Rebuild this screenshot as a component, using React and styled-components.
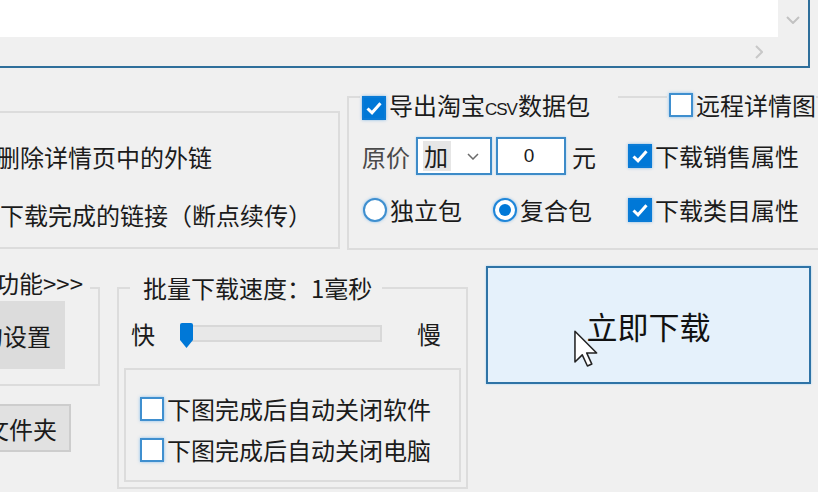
import React from 'react'
import styled, { createGlobalStyle } from 'styled-components'

const GlobalStyle = createGlobalStyle`
	html, body {
		margin: 0;
		padding: 0;
		background: #f0f0f0;
	}
	body {
		font-family: 'Noto Sans CJK SC', 'Noto Sans', sans-serif;
		color: #1b1b1b;
	}
`

const Page = styled.div`
	width: 818px;
	height: 492px;
	overflow: hidden;
	background: #f0f0f0;
	font-size: 24px;
`
// the form is wider than the shot, its left edge is cut off
const Window = styled.div`
	margin-left: -40px;
	width: 900px;
`

/* ---------- log box on top ---------- */
const LogBox = styled.div`
	margin-top: -40px;
	width: 850px;
	height: 108px;
	box-sizing: border-box;
	border: 2px solid #2f6f9b;
	background: #fff;
	display: grid;
	grid-template-columns: 1fr 30px;
	grid-template-rows: 1fr 29px;
`
const VScroll = styled.div`
	background: #f0f0f0;
	display: flex;
	align-items: flex-end;
	justify-content: center;
	padding-bottom: 13px;
`
const HScroll = styled.div`
	background: #f0f0f0;
	display: flex;
	align-items: center;
	justify-content: flex-end;
	padding-right: 15px;
`
const Corner = styled.div`
	background: #f0f0f0;
`

/* ---------- group boxes ---------- */
const Frame = styled.div`
	position: relative;
	box-sizing: border-box;
	border: 2px solid #dcdcdc;
	flex: none;
`
const MidRow = styled.div`
	display: flex;
	align-items: flex-start;
	height: 182px;
`
const OptionsGroup = styled(Frame)`
	width: 380px;
	height: 138px;
	margin-top: 43px;
	padding: 29px 0 0 34px;
	display: flex;
	flex-direction: column;
	gap: 28px;
`
const OptionLine = styled.div`
	height: 30px;
	line-height: 30px;
	white-space: nowrap;
	margin-left: ${p => p.$indent || 0}px;
`
const ExportGroup = styled(Frame)`
	width: 520px;
	height: 154px;
	margin-top: 28px;
	margin-left: 7px;
	padding: 39px 0 0 13px;
`
const TitleRow = styled.div`
	position: absolute;
	top: -4px;
	left: 11px;
	display: flex;
	align-items: center;
	height: 24px;
`
const TitleItem = styled.div`
	background: #f0f0f0;
	padding-left: 2px;
	width: ${p => (p.$w ? p.$w + 'px' : 'auto')};
	margin-left: ${p => p.$ml || 0}px;
	box-sizing: border-box;
`
const OptionGrid = styled.div`
	display: grid;
	grid-template-columns: 266px auto;
	row-gap: 22px;
	align-items: center;
`
const Inline = styled.div`
	display: flex;
	align-items: center;
	white-space: nowrap;
`
const Muted = styled.span`
	color: #4a4a4a;
	width: 48px;
	margin-right: 6px;
`
const Select = styled.div`
	box-sizing: border-box;
	width: 76px;
	height: 38px;
	border: 2px solid #3d8bc8;
	box-shadow: 0 0 2px #a6d2f5;
	background: #fff;
	display: flex;
	align-items: center;
	padding-left: 5px;
	gap: 16px;
`
const SelectValue = styled.span`
	background: #e6e6e6;
	line-height: 30px;
	padding: 0 3px 0 1px;
`
const NumInput = styled.div`
	box-sizing: border-box;
	width: 70px;
	height: 38px;
	margin-left: 4px;
	margin-right: 6px;
	border: 2px solid #3d8bc8;
	box-shadow: 0 0 2px #a6d2f5;
	background: #fff;
	font-family: 'Liberation Sans', sans-serif;
	font-size: 19px;
	display: flex;
	align-items: center;
	justify-content: center;
	padding-right: 4px;
`
const Narrow = styled.span`
	font-family: 'Liberation Sans', sans-serif;
	font-size: 17px;
	letter-spacing: -1px;
	margin-right: 1px;
`

/* ---------- checkbox / radio ---------- */
const CheckItem = styled.label`
	display: inline-flex;
	align-items: center;
	gap: 3px;
	white-space: nowrap;
	height: 26px;
	line-height: 26px;
	margin-left: ${p => p.$ml || 0}px;
`
const Box = styled.span`
	flex: none;
	width: 24px;
	height: 24px;
	box-sizing: border-box;
	display: inline-flex;
	align-items: center;
	justify-content: center;
	border: 2px solid ${p => (p.$on ? '#0a7bd6' : '#3f8fcf')};
	background: ${p => (p.$on ? '#0078d7' : '#fff')};
	box-shadow: 0 0 3px ${p => (p.$on ? 'rgba(0,120,215,.45)' : 'rgba(90,170,235,.7)')};
`
const Round = styled(Box)`
	border-radius: 50%;
	background: #fff;
	border-color: ${p => (p.$on ? '#1f86d9' : '#3f8fcf')};
`
const Dot = styled.span`
	width: 12px;
	height: 12px;
	border-radius: 50%;
	background: #0078d7;
`

const Check = ({ on, children, ml }) => (
	<CheckItem $ml={ml}>
		<Box $on={on}>
			{on && (
				<svg width='18' height='18' viewBox='0 0 18 18'>
					<path d='M2.5 9.5 L7 13.8 L15.5 4.2' fill='none' stroke='#fff' strokeWidth='3' />
				</svg>
			)}
		</Box>
		<span>{children}</span>
	</CheckItem>
)

const Radio = ({ on, children, ml }) => (
	<CheckItem $ml={ml}>
		<Round $on={on}>{on && <Dot />}</Round>
		<span>{children}</span>
	</CheckItem>
)

/* ---------- bottom row ---------- */
const BottomRow = styled.div`
	display: flex;
	align-items: flex-start;
`
const FuncCol = styled.div`
	width: 140px;
	flex: none;
`
const FuncGroup = styled(Frame)`
	width: 140px;
	height: 99px;
	margin-top: 37px;
	padding: 12px 0 0 8px;
`
const FuncTitle = styled.div`
	position: absolute;
	top: -21px;
	right: 8px;
	background: #f0f0f0;
	padding-right: 7px;
	line-height: 30px;
	white-space: nowrap;
`
const GrayButton = styled.div`
	box-sizing: border-box;
	width: 95px;
	height: 68px;
	background: #dcdcdc;
	display: flex;
	align-items: center;
	justify-content: flex-end;
	padding-right: 14px;
	white-space: nowrap;
	overflow: hidden;
`
const FolderButton = styled.div`
	box-sizing: border-box;
	margin-top: 18px;
	margin-left: 10px;
	width: 101px;
	height: 48px;
	background: #e1e1e1;
	border: 2px solid #cdcdcd;
	display: flex;
	align-items: center;
	justify-content: flex-end;
	padding-right: 12px;
	white-space: nowrap;
	overflow: hidden;
`
const SpeedGroup = styled(Frame)`
	width: 351px;
	height: 202px;
	margin-left: 17px;
	margin-top: 37px;
	padding: 29px 5px 0 5px;
`
const SpeedTitle = styled.div`
	position: absolute;
	top: -16px;
	left: 11px;
	background: #f0f0f0;
	padding: 0 10px 0 13px;
	line-height: 30px;
	white-space: nowrap;
`
const SliderRow = styled.div`
	display: flex;
	align-items: center;
	height: 30px;
	padding-left: 7px;
`
const Track = styled.div`
	position: relative;
	box-sizing: border-box;
	width: 200px;
	height: 17px;
	margin: 0 35px 0 27px;
	border: 2px solid #d8d8d8;
	background: #e8e8e8;
`
const Thumb = styled.svg`
	position: absolute;
	left: -4px;
	top: -4px;
`
const InnerBox = styled(Frame)`
	margin-top: 20px;
	width: 337px;
	height: 114px;
	padding: 26px 0 0 14px;
	display: flex;
	flex-direction: column;
	gap: 15px;
`
const BigButton = styled.button`
	position: relative;
	flex: none;
	margin-left: 18px;
	margin-top: 16px;
	width: 325px;
	height: 118px;
	box-sizing: border-box;
	background: #e5f1fb;
	border: 2px solid #2e73a6;
	box-shadow: 0 0 2px #9fd0f3;
	font-family: inherit;
	font-size: 31px;
	color: #111;
	padding: 0;
`
const Cursor = styled.svg`
	position: absolute;
	left: 86px;
	top: 62px;
`

export default function App() {
	return (
		<Page>
			<GlobalStyle />
			<Window>
				<LogBox>
					<div />
					<VScroll>
						<svg width='14' height='8' viewBox='0 0 14 8'>
							<polyline points='1,1 7,7 13,1' fill='none' stroke='#c2c2c2' strokeWidth='2' />
						</svg>
					</VScroll>
					<HScroll>
						<svg width='8' height='14' viewBox='0 0 8 14'>
							<polyline points='1,1 7,7 1,13' fill='none' stroke='#c8c8c8' strokeWidth='2' />
						</svg>
					</HScroll>
					<Corner />
				</LogBox>

				<MidRow>
					<OptionsGroup>
						<OptionLine>删除详情页中的外链</OptionLine>
						<OptionLine $indent={4}>下载完成的链接（断点续传）</OptionLine>
					</OptionsGroup>

					<ExportGroup>
						<TitleRow>
							<TitleItem $w={258}>
								<Check on>
									导出淘宝<Narrow>CSV</Narrow>数据包
								</Check>
							</TitleItem>
							<TitleItem $ml={49}>
								<Check>远程详情图</Check>
							</TitleItem>
						</TitleRow>
						<OptionGrid>
							<Inline>
								<Muted>原价</Muted>
								<Select>
									<SelectValue>加</SelectValue>
									<svg width='12' height='7' viewBox='0 0 12 7'>
										<polyline points='1,1 6,6 11,1' fill='none' stroke='#6b6b6b' strokeWidth='1.5' />
									</svg>
								</Select>
								<NumInput>0</NumInput>
								<span>元</span>
							</Inline>
							<Check on>下载销售属性</Check>
							<Inline>
								<Radio ml={1}>独立包</Radio>
								<Radio on ml={31}>复合包</Radio>
							</Inline>
							<Check on>下载类目属性</Check>
						</OptionGrid>
					</ExportGroup>
				</MidRow>

				<BottomRow>
					<FuncCol>
						<FuncGroup>
							<FuncTitle>更多功能&gt;&gt;&gt;</FuncTitle>
							<GrayButton>其它的设置</GrayButton>
						</FuncGroup>
						<FolderButton>打开文件夹</FolderButton>
					</FuncCol>

					<SpeedGroup>
						<SpeedTitle>批量下载速度：1毫秒</SpeedTitle>
						<SliderRow>
							<span>快</span>
							<Track>
								<Thumb width='13' height='25' viewBox='0 0 13 25'>
									<path d='M2 0 H11 Q13 0 13 2 V17 L6.5 25 L0 17 V2 Q0 0 2 0 Z' fill='#0078d7' />
								</Thumb>
							</Track>
							<span>慢</span>
						</SliderRow>
						<InnerBox>
							<Check>下图完成后自动关闭软件</Check>
							<Check>下图完成后自动关闭电脑</Check>
						</InnerBox>
					</SpeedGroup>

					<BigButton>
						立即下载
						<Cursor width='24' height='38' viewBox='0 0 12.5 19.5'>
							<path
								d='M0.5 0.5 L0.5 16.5 L4.3 12.8 L7 18.6 L9.3 17.6 L6.6 11.8 L11.8 11.8 Z'
								fill='#fff'
								stroke='#222'
								strokeWidth='0.8'
								strokeLinejoin='round'
							/>
						</Cursor>
					</BigButton>
				</BottomRow>
			</Window>
		</Page>
	)
}
